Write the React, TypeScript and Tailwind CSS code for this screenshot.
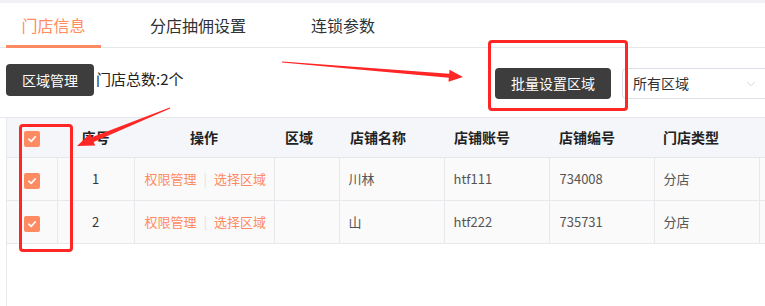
import React from 'react';
import { ChevronDown } from 'lucide-react';

const font = { fontFamily: '"Noto Sans CJK SC", "Noto Sans", sans-serif' };

const rows = [
  { no: 1, name: '川林', account: 'htf111', code: '734008', type: '分店' },
  { no: 2, name: '山', account: 'htf222', code: '735731', type: '分店' },
];

const Check = () => (
  <span className="inline-flex w-4 h-4 items-center justify-center rounded-[2px] bg-[#ff8b62]">
    <svg width="10" height="10" viewBox="0 0 10 10">
      <path d="M1.8 5.2 L4.2 7.4 L8.3 2.8" fill="none" stroke="#fff" strokeWidth="1.6" strokeLinecap="round" strokeLinejoin="round" />
    </svg>
  </span>
);

export default function App() {
  return (
    <div className="relative w-[765px] h-[306px] overflow-hidden bg-white flex flex-col text-[#333]" style={font}>
      <div className="h-[3px] bg-[#eff1f4]" />

      {/* tabs */}
      <div className="flex h-[45px] border-b border-[#e6e8eb] text-[16px]">
        <div className="ml-[6px] w-[95px] flex items-center justify-center text-[#ff8b62] border-b-[3px] border-[#ff8b62] -mb-px pt-[2px]">
          门店信息
        </div>
        <div className="ml-[49px] flex items-center text-[#303133]">分店抽佣设置</div>
        <div className="ml-[65px] flex items-center text-[#303133]">连锁参数</div>
      </div>

      {/* toolbar */}
      <div className="flex items-start h-[70px] pt-[16px] border-b border-[#e6e8eb]">
        <button className="ml-[6px] w-[88px] h-[32px] rounded-[4px] bg-[#3d3d3d] text-white text-[14px]">
          区域管理
        </button>
        <span className="ml-[2px] mt-[4px] text-[15px] text-[#222]">门店总数:2个</span>
        <div className="ml-auto mt-[4px] flex items-center shrink-0 -mr-[10px]">
          <button className="w-[116px] h-[31px] rounded-[4px] bg-[#3d3d3d] text-white text-[14px]">
            批量设置区域
          </button>
          <div className="ml-[11px] w-[153px] h-[31px] rounded-[4px] border border-[#dcdfe6] flex items-center pl-[10px] pr-[16px] text-[14px] text-[#303133]">
            <span className="flex-1">所有区域</span>
            <ChevronDown size={14} strokeWidth={1.2} color="#c0c4cc" />
          </div>
        </div>
      </div>

      {/* table */}
      <div className="flex-1 ml-[6px] border-l border-[#e6e8eb]">
        <table className="table-fixed border-collapse w-[900px] text-[13px]">
          <colgroup>
            <col className="w-[50px]" />
            <col className="w-[77px]" />
            <col className="w-[140px]" />
            <col className="w-[65px]" />
            <col className="w-[105px]" />
            <col className="w-[105px]" />
            <col className="w-[105px]" />
            <col className="w-[105px]" />
            <col className="w-[148px]" />
          </colgroup>
          <thead>
            <tr className="h-[39px] bg-[#f4f6fa] border-b border-[#e6e8eb] text-[14px] font-bold text-[#222]">
              <th className="text-center align-middle"><span className="inline-flex align-middle"><Check /></span></th>
              <th className="text-center">序号</th>
              <th className="text-center">操作</th>
              <th className="text-left pl-[11px]">区域</th>
              <th className="text-left pl-[11px]">店铺名称</th>
              <th className="text-left pl-[10px]">店铺账号</th>
              <th className="text-left pl-[10px]">店铺编号</th>
              <th className="text-left pl-[9px]">门店类型</th>
              <th />
            </tr>
          </thead>
          <tbody>
            {rows.map((r) => (
              <tr key={r.no} className="h-[43px] bg-[#fafafa] text-[#555]">
                <td className="border-r border-b border-[#e6e8eb] text-center"><span className="inline-flex align-middle mt-[2px]"><Check /></span></td>
                <td className="border-r border-b border-[#e6e8eb] text-center text-[#333]">{r.no}</td>
                <td className="border-r border-b border-[#e6e8eb] pl-[10px] text-[#ff8b62]">
                  权限管理<span className="mx-[7px] text-[#e3e3e3]">|</span>选择区域
                </td>
                <td className="border-r border-b border-[#e6e8eb]" />
                <td className="border-r border-b border-[#e6e8eb] pl-[9px]">{r.name}</td>
                <td className="border-r border-b border-[#e6e8eb] pl-[9px]">{r.account}</td>
                <td className="border-r border-b border-[#e6e8eb] pl-[10px]">{r.code}</td>
                <td className="border-r border-b border-[#e6e8eb] pl-[9px]">{r.type}</td>
                <td className="border-b border-[#e6e8eb]" />
              </tr>
            ))}
          </tbody>
        </table>
      </div>

      {/* red annotations */}
      <div className="absolute left-[19px] top-[124px] w-[54px] h-[128px] border-[3px] border-[#ff2626] rounded-[4px]" />
      <div className="absolute left-[488px] top-[40px] w-[140px] h-[71px] border-[3px] border-[#ff2626] rounded-[4px]" />
      <svg className="absolute left-0 top-0 pointer-events-none" width="765" height="306">
        <polygon fill="#ff2626" points="282,61.5 449.2,73.8 449.5,69.8 463,77 448.5,81.8 448.8,77.8 282,62.5" />
        <polygon fill="#ff2626" points="169.8,107.5 91.8,137.3 90.2,133.6 77,146 95.2,145.6 93.6,141.9 170.2,108.5" />
      </svg>
    </div>
  );
}
